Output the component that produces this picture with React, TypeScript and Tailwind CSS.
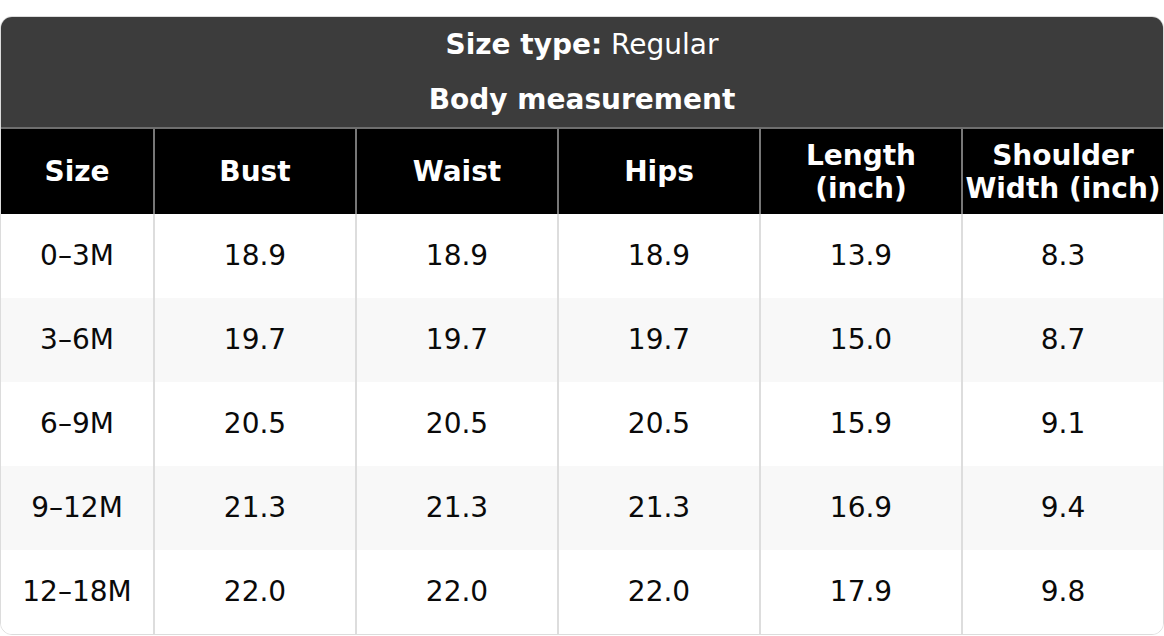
const columns = ["Size", "Bust", "Waist", "Hips", "Length (inch)", "Shoulder Width (inch)"]

const rows = [
  ["0–3M", "18.9", "18.9", "18.9", "13.9", "8.3"],
  ["3–6M", "19.7", "19.7", "19.7", "15.0", "8.7"],
  ["6–9M", "20.5", "20.5", "20.5", "15.9", "9.1"],
  ["9–12M", "21.3", "21.3", "21.3", "16.9", "9.4"],
  ["12–18M", "22.0", "22.0", "22.0", "17.9", "9.8"],
]

export default function App() {
  return (
    <div className="min-h-screen bg-white pt-4 font-['DejaVu_Sans',sans-serif]">
      <div className="overflow-hidden rounded-[12px] border border-[#dcdcdc] bg-white">
        {/* title block */}
        <div className="bg-[#3c3c3c] text-center text-[28px] leading-[55px] text-white">
          <div>
            <span className="font-bold">Size type:</span> Regular
          </div>
          <div className="font-bold">Body measurement</div>
        </div>

        {/* column headings */}
        <div className="grid grid-cols-[152px_repeat(5,1fr)] border-t-2 border-[#6e6e6e] bg-black">
          {columns.map((col, i) => (
            <div
              key={col}
              className={
                "flex h-[85px] items-center justify-center text-center text-[28px] leading-[33px] font-bold text-white" +
                (i > 0 ? " border-l-2 border-[#777777]" : "")
              }
            >
              {col}
            </div>
          ))}
        </div>

        {/* rows */}
        {rows.map((row, r) => (
          <div
            key={row[0]}
            className={
              "grid grid-cols-[152px_repeat(5,1fr)] " + (r % 2 === 1 ? "bg-[#f8f8f8]" : "bg-white")
            }
          >
            {row.map((cell, i) => (
              <div
                key={i}
                className={
                  "flex h-[84px] items-center justify-center text-[28px] text-[#0a0a0a]" +
                  (i > 0 ? " border-l-2 border-[#dddddd]" : "")
                }
              >
                {cell}
              </div>
            ))}
          </div>
        ))}
      </div>
    </div>
  )
}
